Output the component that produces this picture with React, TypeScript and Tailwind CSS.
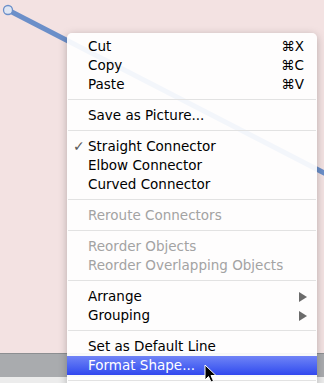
import { ReactNode } from 'react'

type Item =
  | { sep: true }
  | { label: string; shortcut?: string; disabled?: boolean; checked?: boolean; submenu?: boolean; active?: boolean }

const items: Item[] = [
  { label: 'Cut', shortcut: '⌘X' },
  { label: 'Copy', shortcut: '⌘C' },
  { label: 'Paste', shortcut: '⌘V' },
  { sep: true },
  { label: 'Save as Picture...' },
  { sep: true },
  { label: 'Straight Connector', checked: true },
  { label: 'Elbow Connector' },
  { label: 'Curved Connector' },
  { sep: true },
  { label: 'Reroute Connectors', disabled: true },
  { sep: true },
  { label: 'Reorder Objects', disabled: true },
  { label: 'Reorder Overlapping Objects', disabled: true },
  { sep: true },
  { label: 'Arrange', submenu: true },
  { label: 'Grouping', submenu: true },
  { sep: true },
  { label: 'Set as Default Line' },
  { label: 'Format Shape...', active: true },
  { sep: true },
]

function Row({ item }: { item: Exclude<Item, { sep: true }> }) {
  let cls = 'text-black'
  if (item.disabled) cls = 'text-[#a3a3a3]'
  if (item.active) cls = 'text-white bg-gradient-to-b from-[#7083f6] to-[#3247ee]'

  return (
    <div className={`relative flex h-[19px] items-center pl-[21px] pr-[13px] ${cls}`}>
      {item.checked && <span className="absolute left-[6px] text-[14px] text-[#5a5a5a]">✓</span>}
      <span className="flex-1">{item.label}</span>
      {item.shortcut && <span>{item.shortcut}</span>}
      {item.submenu && (
        <svg width="8" height="10" viewBox="0 0 8 10" className="mr-[-3px]">
          <path d="M0 0 L8 5 L0 10 Z" fill="#6b6b6b" />
        </svg>
      )}
    </div>
  )
}

function Menu({ children }: { children: ReactNode }) {
  return (
    <div className="absolute left-[67px] top-[33px] w-[250px] rounded-t-[5px] bg-white/[0.92] pt-[4px] shadow-[0_2px_8px_rgba(0,0,0,0.25)]">
      {children}
    </div>
  )
}

export default function App() {
  return (
    <div
      className="relative h-[383px] w-[324px] overflow-hidden text-[13.5px]"
      style={{ fontFamily: '"DejaVu Sans", sans-serif' }}
    >
      {/* canvas + toolbar */}
      <div className="flex h-full flex-col">
        <div className="h-[353px] bg-[#f3e2e2]" />
        <div className="h-[24px] border-t border-[#8c8e91] bg-[#a9abae]" />
        <div className="flex-1 bg-[#ececec]" />
      </div>

      {/* connector line */}
      <svg className="absolute left-0 top-0" width="324" height="383">
        <line x1="8" y1="10" x2="330" y2="176" stroke="#6b8fc9" strokeWidth="5" />
        <circle cx="8" cy="10" r="4.5" fill="#dfe6f3" stroke="#6b8fc9" strokeWidth="1.3" />
      </svg>

      <Menu>
        {items.map((item, i) =>
          'sep' in item ? (
            <div key={i} className="h-[12px] pt-[5px]">
              <div className="mx-[1px] h-px bg-[#e2e2e2]" />
            </div>
          ) : (
            <Row key={i} item={item} />
          )
        )}
      </Menu>

      {/* mouse pointer */}
      <svg className="absolute left-[204px] top-[364px]" width="14" height="20" viewBox="0 0 14 20">
        <path d="M1 1 L1 16 L4.5 12.5 L7 18 L9.5 17 L7 11.5 L12 11.5 Z" fill="#000" stroke="#fff" strokeWidth="1" />
      </svg>
    </div>
  )
}
